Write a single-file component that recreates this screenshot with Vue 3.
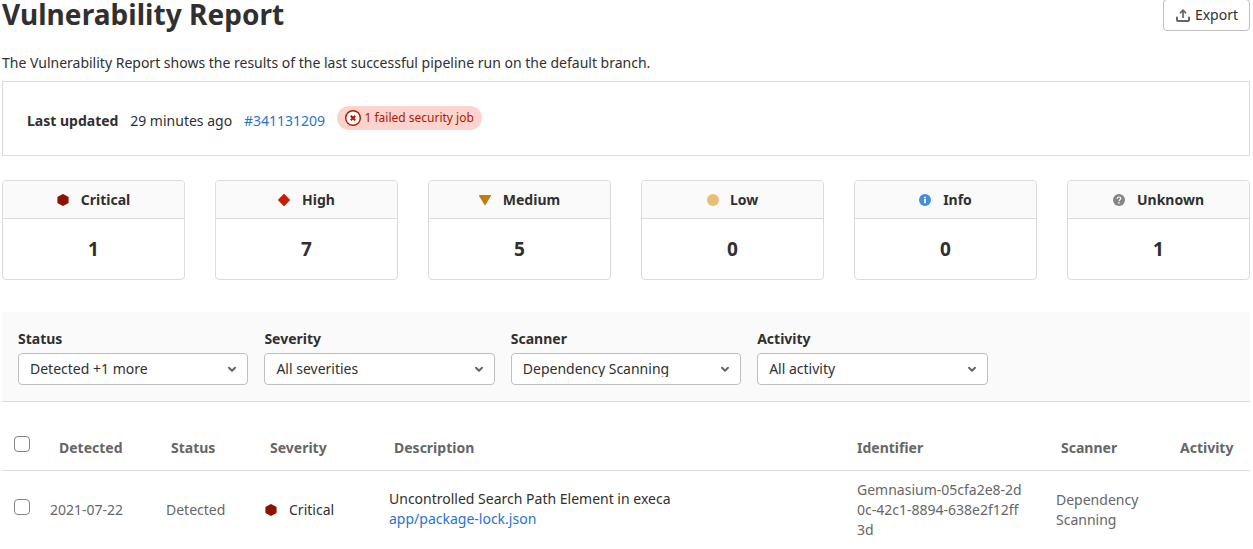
<script setup>
const cards = [
  { name: 'Critical', count: 1 },
  { name: 'High', count: 7 },
  { name: 'Medium', count: 5 },
  { name: 'Low', count: 0 },
  { name: 'Info', count: 0 },
  { name: 'Unknown', count: 1 },
]
const filters = [
  { label: 'Status', value: 'Detected +1 more' },
  { label: 'Severity', value: 'All severities' },
  { label: 'Scanner', value: 'Dependency Scanning', clipped: true },
  { label: 'Activity', value: 'All activity' },
]
</script>

<template>
  <main class="report">
    <header class="head">
      <h1>Vulnerability Report</h1>
      <button class="export" type="button">
        <svg width="16" height="16" viewBox="0 0 16 16" fill="none" stroke="#666">
          <path d="M2 10.6V13a1 1 0 0 0 1 1h10a1 1 0 0 0 1-1v-2.400" stroke-width="2" stroke-linecap="round" />
          <path d="M8 11V3.200M5 6.200l3-3 3 3" stroke-width="1.7" />
        </svg>
        <span>Export</span>
      </button>
    </header>

    <p class="intro">The Vulnerability Report shows the results of the last successful pipeline run on the default branch.</p>

    <section class="pipeline">
      <strong>Last updated</strong>
      <span>29 minutes ago</span>
      <a>#341131209</a>
      <span class="badge">
        <svg width="16" height="16" viewBox="0 0 16 16">
          <circle cx="8" cy="8" r="7.3" fill="#fff" stroke="#ae1800" stroke-width="1.4" />
          <path d="M5.8 5.8l4.4 4.4M10.2 5.8l-4.4 4.4" stroke="#ae1800" stroke-width="2" fill="none" />
        </svg>
        <span>1 failed security job</span>
      </span>
    </section>

    <section class="cards">
      <article v-for="c in cards" :key="c.name" class="card">
        <div class="card-head" :class="c.name.toLowerCase()">
          <svg width="12" height="12" viewBox="0 0 12 12">
            <path v-if="c.name === 'Critical'" fill="#8d1300" d="M5.5.2a1 1 0 0 1 1 0l4.7 2.6a.8.8 0 0 1 .4.7v5a.8.8 0 0 1-.4.7l-4.7 2.6a1 1 0 0 1-1 0L.8 9.2a.8.8 0 0 1-.4-.7v-5a.8.8 0 0 1 .4-.7z" />
            <path v-else-if="c.name === 'High'" fill="#c91c00" d="M5.4.3a.8.8 0 0 1 1.2 0l5.1 5.1a.8.8 0 0 1 0 1.2l-5.1 5.1a.8.8 0 0 1-1.2 0L.3 6.6a.8.8 0 0 1 0-1.2z" />
            <path v-else-if="c.name === 'Medium'" fill="#c17d10" d="M.8 1h10.4a.7.7 0 0 1 .7 1.1L6.6 10.7a.7.7 0 0 1-1.2 0L.1 2.1A.7.7 0 0 1 .8 1z" />
            <circle v-else-if="c.name === 'Low'" fill="#e9be74" cx="6" cy="6" r="6" />
            <g v-else-if="c.name === 'Info'">
              <circle fill="#428fdc" cx="6" cy="6" r="6" />
              <path fill="#fff" d="M5 2.7h2v1.5H5zM4.9 5H7v4.2H5V6z" opacity=".85" />
            </g>
            <g v-else>
              <circle fill="#868686" cx="6" cy="6" r="6" />
              <path d="M4.2 4.6C4.3 3.4 5 3 6 3s1.8.6 1.8 1.5C7.8 5.6 6 5.7 6 7.2" stroke="#fff" stroke-width="1.2" fill="none" />
              <circle fill="#fff" cx="6" cy="8.9" r=".8" />
            </g>
          </svg>
          <span>{{ c.name }}</span>
        </div>
        <div class="card-body">{{ c.count }}</div>
      </article>
    </section>

    <section class="filters">
      <div v-for="f in filters" :key="f.label" class="filter">
        <label>{{ f.label }}</label>
        <div class="select">
          <span :class="{ clipped: f.clipped }">{{ f.value }}</span>
          <svg width="16" height="16" viewBox="0 0 16 16" fill="none" stroke="#666" stroke-width="2" stroke-linecap="round" stroke-linejoin="round">
            <path d="M5 6.8l3 3 3-3" />
          </svg>
        </div>
      </div>
    </section>

    <section class="table">
      <div class="row thead">
        <span><i class="check"></i></span>
        <span>Detected</span>
        <span>Status</span>
        <span>Severity</span>
        <span>Description</span>
        <span class="ident">Identifier</span>
        <span>Scanner</span>
        <span>Activity</span>
      </div>
      <div class="row tbody">
        <span><i class="check"></i></span>
        <span>2021-07-22</span>
        <span>Detected</span>
        <span class="severity">
          <svg width="12" height="12" viewBox="0 0 12 12">
            <path fill="#8d1300" d="M5.5.2a1 1 0 0 1 1 0l4.7 2.6a.8.8 0 0 1 .4.7v5a.8.8 0 0 1-.4.7l-4.7 2.6a1 1 0 0 1-1 0L.8 9.2a.8.8 0 0 1-.4-.7v-5a.8.8 0 0 1 .4-.7z" />
          </svg>
          Critical
        </span>
        <span class="desc">Uncontrolled Search Path Element in execa<br /><a>app/package-lock.json</a></span>
        <span class="ident">Gemnasium-05cfa2e8-2d0c-42c1-8894-638e2f12ff3d</span>
        <span>Dependency Scanning</span>
        <span></span>
      </div>
    </section>
  </main>
</template>

<style>
body {
  margin: 0;
  background: #fff;
  overflow: hidden;
}
#app {
  display: flow-root;
}
</style>

<style scoped>
.report {
  box-sizing: border-box;
  width: 1248px;
  margin: -1px 0 0 2px;
  font: 14px/20px 'Noto Sans', sans-serif;
  color: #303030;
}
.head {
  display: flex;
  justify-content: space-between;
  height: 32px;
}
h1 {
  margin: 0;
  font-size: 28px;
  line-height: 30px;
  letter-spacing: 0.05px;
  font-weight: 700;
}
.export {
  box-sizing: border-box;
  display: flex;
  align-items: center;
  gap: 4px;
  height: 32px;
  padding: 0 11px;
  border: 1px solid #bfbfbf;
  border-radius: 4px;
  background: #fff;
  color: #303030;
  font: inherit;
}
.intro {
  margin: 22px 0 8px;
}
a {
  color: #1f75cb;
}
.pipeline {
  box-sizing: border-box;
  display: flex;
  align-items: center;
  gap: 11.8px;
  height: 75px;
  padding: 4px 24px 0;
  border: 1px solid #dbdbdb;
}
.badge {
  display: flex;
  align-items: center;
  gap: 4px;
  height: 24px;
  margin-top: -6px;
  padding: 0 8px;
  border-radius: 12px;
  background: #fdd4cd;
  color: #ae1800;
  font-size: 12px;
}
.badge span {
  margin-left: -0.4px;
}
.cards {
  display: grid;
  grid-template-columns: repeat(6, 1fr);
  gap: 30px;
  margin-top: 24px;
}
.card {
  box-sizing: border-box;
  height: 100px;
  border: 1px solid #dbdbdb;
  border-radius: 4px;
  overflow: hidden;
}
.card-head {
  display: flex;
  align-items: center;
  justify-content: center;
  gap: 12px;
  height: 37px;
  border-bottom: 1px solid #dbdbdb;
  background: #fafafa;
  font-weight: 700;
}
.card-head.low {
  gap: 11.4px;
}
.card-body {
  height: 60px;
  line-height: 60px;
  text-align: center;
  font-size: 19px;
  font-weight: 700;
}
.filters {
  box-sizing: border-box;
  display: flex;
  gap: 16px;
  height: 90px;
  margin-top: 32px;
  padding: 17px 16px 0;
  border-bottom: 1px solid #dbdbdb;
  background: #fafafa;
}
.filter {
  width: 230.4px;
}
.filter label {
  display: block;
  height: 24px;
  font-weight: 700;
}
.select {
  box-sizing: border-box;
  display: flex;
  align-items: center;
  justify-content: space-between;
  height: 32px;
  padding: 0 7px 0 11px;
  border: 1px solid #bfbfbf;
  border-radius: 4px;
  background: #fff;
}
.clipped {
  line-height: 16px;
  overflow: hidden;
}
.row {
  display: grid;
  box-sizing: border-box;
  align-items: center;
}
.check {
  display: block;
  box-sizing: border-box;
  width: 16px;
  height: 16px;
  margin-left: 12px;
  border: 1px solid #868686;
  border-radius: 4px;
  background: #fff;
}
.thead {
  grid-template-columns: 57px 112px 99px 124px 463px 204px 119px 1fr;
  height: 69px;
  padding-top: 24px;
  border-bottom: 1px solid #dbdbdb;
  font-weight: 700;
  color: #666;
}
.thead .check {
  margin-bottom: 9px;
}
.tbody {
  grid-template-columns: 48px 116px 99px 124px 468px 199px 119px 1fr;
  height: 77px;
  color: #666;
}
.tbody .check {
  margin-bottom: 6px;
}
.tbody .ident {
  width: 168px;
  word-break: break-all;
}
.severity {
  display: flex;
  align-items: center;
  gap: 12px;
  color: #303030;
}
.desc {
  margin-top: -2px;
  color: #303030;
}
</style>
